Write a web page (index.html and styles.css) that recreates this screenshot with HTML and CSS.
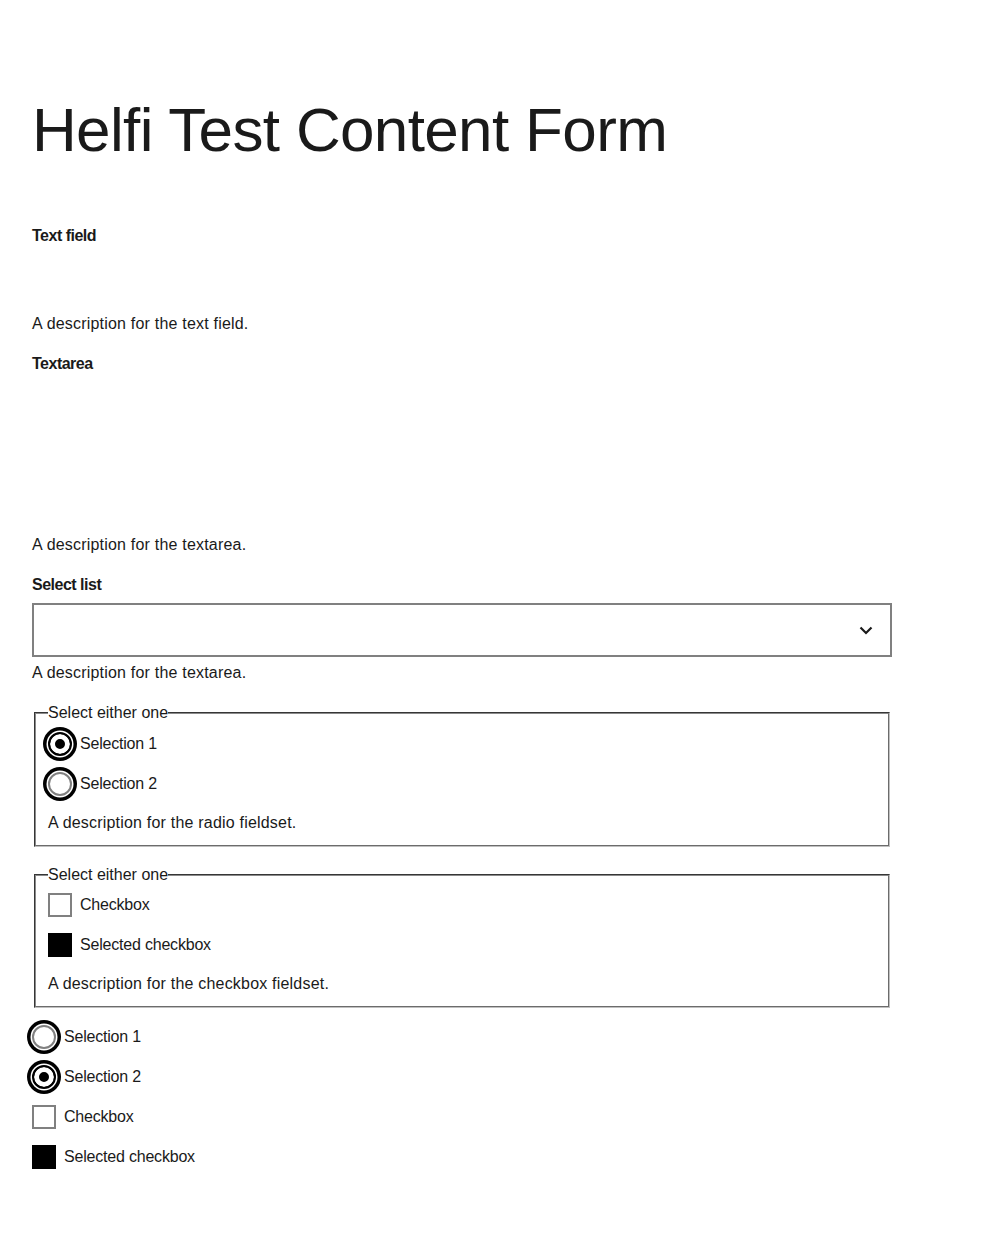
FILE: index.html
```html
<!DOCTYPE html>
<html lang="en">
<head>
<meta charset="utf-8">
<title>Helfi Test Content Form</title>
<link rel="stylesheet" href="styles.css">
</head>
<body>
<main class="page">
  <h1 class="title">Helfi Test Content Form</h1>
  <form class="form">
    <div class="field">
      <label class="label" for="tf">Text field</label>
      <input class="text-input" id="tf" type="text">
      <div class="desc">A description for the text field.</div>
    </div>
    <div class="field">
      <label class="label" for="ta">Textarea</label>
      <textarea class="textarea" id="ta"></textarea>
      <div class="desc">A description for the textarea.</div>
    </div>
    <div class="field">
      <label class="label" for="sl">Select list</label>
      <div class="select">
        <span class="select-value" id="sl"></span>
        <svg class="chevron" width="24" height="24" viewBox="0 0 24 24" aria-hidden="true"><path d="M6.5 9.5 12 15l5.5-5.5" fill="none" stroke="#1a1a1a" stroke-width="2.2"/></svg>
      </div>
      <div class="desc">A description for the textarea.</div>
    </div>

    <fieldset class="group">
      <legend class="legend">Select either one</legend>
      <div class="options">
        <label class="option"><input class="radio" type="radio" name="r1" checked><span>Selection 1</span></label>
        <label class="option"><input class="radio" type="radio" name="r1"><span>Selection 2</span></label>
      </div>
      <div class="desc group-desc">A description for the radio fieldset.</div>
    </fieldset>

    <fieldset class="group">
      <legend class="legend">Select either one</legend>
      <div class="options">
        <label class="option"><input class="check" type="checkbox"><span>Checkbox</span></label>
        <label class="option"><input class="check" type="checkbox" checked><span>Selected checkbox</span></label>
      </div>
      <div class="desc group-desc">A description for the checkbox fieldset.</div>
    </fieldset>

    <div class="options standalone">
      <label class="option"><input class="radio" type="radio" name="r2"><span>Selection 1</span></label>
      <label class="option"><input class="radio" type="radio" name="r2" checked><span>Selection 2</span></label>
      <label class="option"><input class="check" type="checkbox"><span>Checkbox</span></label>
      <label class="option"><input class="check" type="checkbox" checked><span>Selected checkbox</span></label>
    </div>
  </form>
</main>
</body>
</html>
```

FILE: styles.css
```css
html, body {
  margin: 0;
  padding: 0;
  background: #fff;
}

body {
  font-family: "Liberation Sans", Arial, sans-serif;
  font-size: 16px;
  line-height: 24px;
  color: #1a1a1a;
  letter-spacing: -0.2px;
}

.page {
  width: 860px;
  padding: 0 32px;
}

.title {
  margin: 94px 0 58px;
  font-size: 62px;
  line-height: 72px;
  font-weight: 400;
  letter-spacing: -0.65px;
  color: #1a1a1a;
}

.form {
  display: flex;
  flex-direction: column;
}

.field {
  display: flex;
  flex-direction: column;
  margin-bottom: 16px;
}

.label {
  display: block;
  font-weight: 700;
  letter-spacing: -0.5px;
  height: 24px;
  margin-bottom: 6px;
}

.text-input {
  box-sizing: border-box;
  height: 54px;
  width: 100%;
  border: 0;
  background: transparent;
  margin: 0;
  padding: 0;
}

.textarea {
  box-sizing: border-box;
  height: 147px;
  width: 100%;
  border: 0;
  background: transparent;
  margin: 0;
  padding: 0;
  resize: none;
}

.select {
  box-sizing: border-box;
  height: 54px;
  width: 100%;
  border: 2px solid #808080;
  display: flex;
  align-items: center;
  justify-content: space-between;
  padding: 0 12px 0 14px;
}

.chevron {
  display: block;
}

.desc {
  margin-top: 4px;
  height: 24px;
  letter-spacing: 0.2px;
}

.group {
  margin: 0 2px 16px;
  padding: 6.5px 12px 10px;
  border: 2px groove #c0c0c0;
  border-top-color: #8a8a8a;
  border-left-color: #8a8a8a;
}

.legend {
  padding: 0;
  height: 24px;
  letter-spacing: 0;
}

.options {
  display: flex;
  flex-direction: column;
  gap: 16px;
}

.option {
  display: flex;
  align-items: center;
  gap: 8px;
  height: 24px;
}

.group-desc {
  margin-top: 15px;
}

.standalone {
  margin-top: 1px;
}

.radio {
  appearance: none;
  -webkit-appearance: none;
  box-sizing: border-box;
  width: 24px;
  height: 24px;
  margin: 0;
  border-radius: 50%;
  border: 2px solid #808080;
  background: #fff;
  box-shadow: 0 0 0 1.5px #fff, 0 0 0 5px #000;
  flex: none;
}

.radio:checked {
  border-color: #000;
  background: #000;
  box-shadow: inset 0 0 0 5px #fff, 0 0 0 1.5px #fff, 0 0 0 5px #000;
}

.check {
  appearance: none;
  -webkit-appearance: none;
  box-sizing: border-box;
  width: 24px;
  height: 24px;
  margin: 0;
  border: 2px solid #808080;
  background: #fff;
  flex: none;
}

.check:checked {
  border-color: #000;
  background: #000;
}
```
